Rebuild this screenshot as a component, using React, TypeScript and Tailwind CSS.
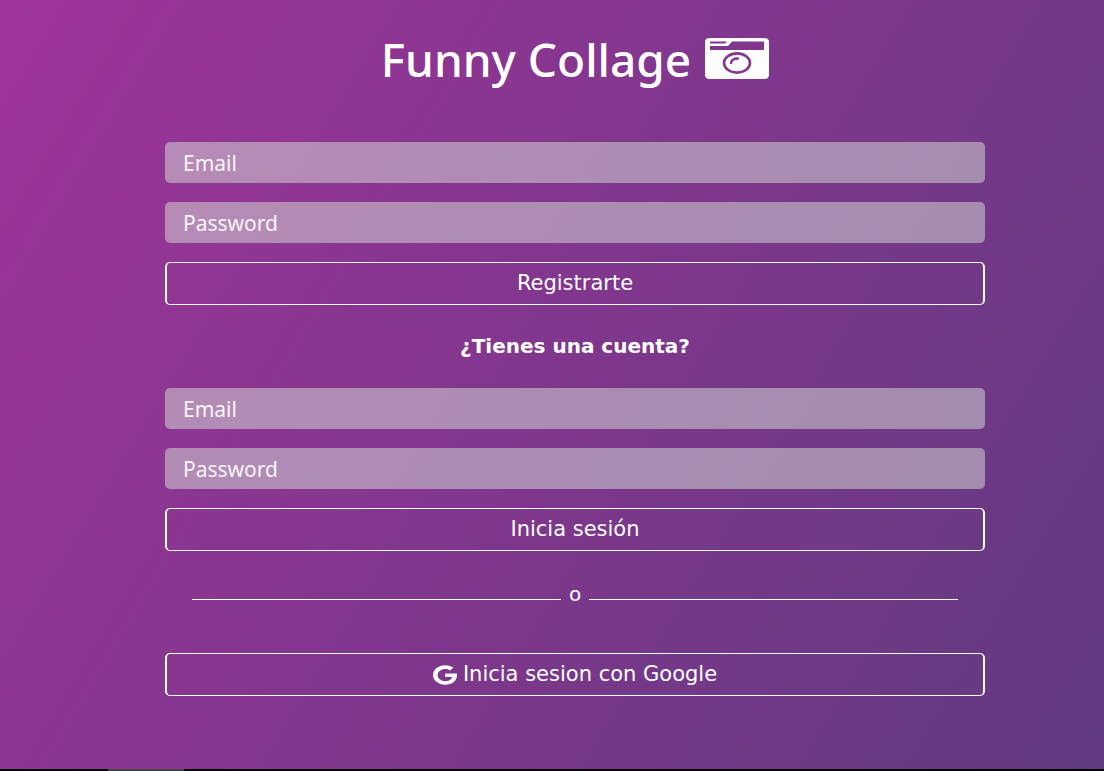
import { FaGoogle } from "react-icons/fa";

const action =
  "flex h-[43px] w-full items-center justify-center gap-1.5 rounded-[5px] border border-x-2 border-white text-[21px] text-white";

function Camera() {
  return (
    <svg viewBox="0 0 64 42" className="h-[42px] w-16" fill="none" aria-hidden="true">
      <path
        fill="#fff"
        fillRule="evenodd"
        d="M5 0H59Q64 0 64 4V37Q64 41 59 41H5Q0 41 0 37V4Q0 0 5 0ZM5 3.5V5.5H20L22 3.5ZM5 8V12H59V3.5H27L23 8Z"
      />
      <ellipse cx="32" cy="25" rx="13" ry="9.6" stroke="#84368c" strokeWidth="2.6" />
      <path d="M26 25Q26.5 20.5 33 20.5" stroke="#84368c" strokeWidth="2.4" strokeLinecap="round" />
    </svg>
  );
}

function Field({ label, type }: { label: string; type: string }) {
  return (
    <input
      type={type}
      aria-label={label}
      placeholder={label}
      className="block h-[41px] w-full rounded-[5px] bg-[#d7e1d7]/50 px-[18px] font-['Noto_Sans',sans-serif] text-[21px] text-white outline-none placeholder:text-white/90"
    />
  );
}

export default function App() {
  return (
    <div className="flex min-h-screen flex-col bg-black font-['DejaVu_Sans',sans-serif] text-white">
      <main className="grow bg-[linear-gradient(121deg,#9f349a,#613a80)] pr-[119px] pl-[165px]">
        <h1 className="flex items-center justify-center gap-3.5 pt-6 font-['Noto_Sans',sans-serif] text-[46px] leading-[70px] font-medium">
          Funny Collage <Camera />
        </h1>
        <form className="mt-12 flex flex-col gap-[19px]" onSubmit={(e) => e.preventDefault()}>
          <Field label="Email" type="email" />
          <Field label="Password" type="password" />
          <button className={action}>Registrarte</button>
        </form>
        <h2 className="my-[29px] text-center text-[20px] leading-[25px] font-bold">¿Tienes una cuenta?</h2>
        <form className="flex flex-col gap-[19px]" onSubmit={(e) => e.preventDefault()}>
          <Field label="Email" type="email" />
          <Field label="Password" type="password" />
          <button className={action}>Inicia sesión</button>
        </form>
        <div className="mt-[30px] mb-[46px] flex h-[26px] gap-2 px-[27px] text-[20px] leading-[26px]">
          <span className="mt-[18px] h-px grow bg-white" />
          o
          <span className="mt-[18px] h-px grow bg-white" />
        </div>
        <button className={action}>
          <FaGoogle className="h-5 w-6" preserveAspectRatio="none" />
          Inicia sesion con Google
        </button>
      </main>
      <footer className="h-0.5 bg-black pl-[108px]">
        <div className="h-0.5 w-[76px] bg-[#444]" />
      </footer>
    </div>
  );
}
